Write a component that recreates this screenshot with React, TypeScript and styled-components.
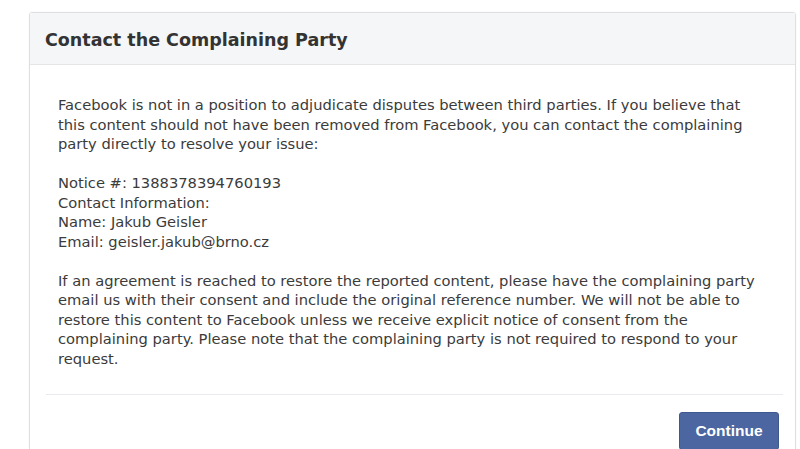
import React from "react";
import styled, { createGlobalStyle } from "styled-components";

const GlobalStyle = createGlobalStyle`
  html, body {
    margin: 0;
    padding: 0;
    background: #ffffff;
  }
  body {
    font-family: "DejaVu Sans", "Liberation Sans", sans-serif;
    color: #333333;
  }
`;

const Page = styled.div`
  padding: 12px 4px 0 29px;
  height: 449px;
  box-sizing: border-box;
  overflow: hidden;
`;

const Card = styled.section`
  border: 1px solid #dddfe2;
  border-radius: 3px 3px 0 0;
  background: #ffffff;
  box-shadow: 0 0 2px rgba(0, 0, 0, 0.05);
`;

const Header = styled.header`
  height: 52px;
  display: flex;
  align-items: center;
  padding: 2px 15px 0 15px;
  background: #f5f6f7;
  border-bottom: 1px solid #e5e5e5;
  box-sizing: border-box;
  h2 {
    margin: 0;
    font-size: 17.5px;
    font-weight: bold;
    color: #333333;
  }
`;

const Body = styled.div`
  padding: 30px 0 0 28px;
  width: 705px;
`;

const Paragraph = styled.p`
  margin: 0 0 19.5px 0;
  font-size: 14.7px;
  line-height: 19.5px;
  color: #3b3b3b;
  &:last-child {
    margin-bottom: 0;
  }
`;

const Divider = styled.hr`
  border: none;
  border-top: 1px solid #e9eaed;
  margin: 26px 12px 0 16px;
`;

const Footer = styled.div`
  display: flex;
  justify-content: flex-end;
  padding: 17px 16px 20px 16px;
`;

const PrimaryButton = styled.button`
  width: 100px;
  height: 38px;
  background: #4b66a0;
  border: 1px solid #3f5890;
  border-radius: 3px;
  color: #ffffff;
  font-family: "Liberation Sans", Arial, sans-serif;
  font-size: 15.5px;
  font-weight: bold;
  cursor: pointer;
`;

const App: React.FC = () => {
  return (
    <Page>
      <GlobalStyle />
      <Card>
        <Header>
          <h2>Contact the Complaining Party</h2>
        </Header>
        <Body>
          <Paragraph>
            Facebook is not in a position to adjudicate disputes between third parties. If you believe that
            this content should not have been removed from Facebook, you can contact the complaining
            party directly to resolve your issue:
          </Paragraph>
          <Paragraph>
            Notice #: 1388378394760193
            <br />
            Contact Information:
            <br />
            Name: Jakub Geisler
            <br />
            Email: geisler.jakub@brno.cz
          </Paragraph>
          <Paragraph>
            If an agreement is reached to restore the reported content, please have the complaining party
            email us with their consent and include the original reference number. We will not be able to
            restore this content to Facebook unless we receive explicit notice of consent from the
            complaining party. Please note that the complaining party is not required to respond to your
            request.
          </Paragraph>
        </Body>
        <Divider />
        <Footer>
          <PrimaryButton>Continue</PrimaryButton>
        </Footer>
      </Card>
    </Page>
  );
};

export default App;
